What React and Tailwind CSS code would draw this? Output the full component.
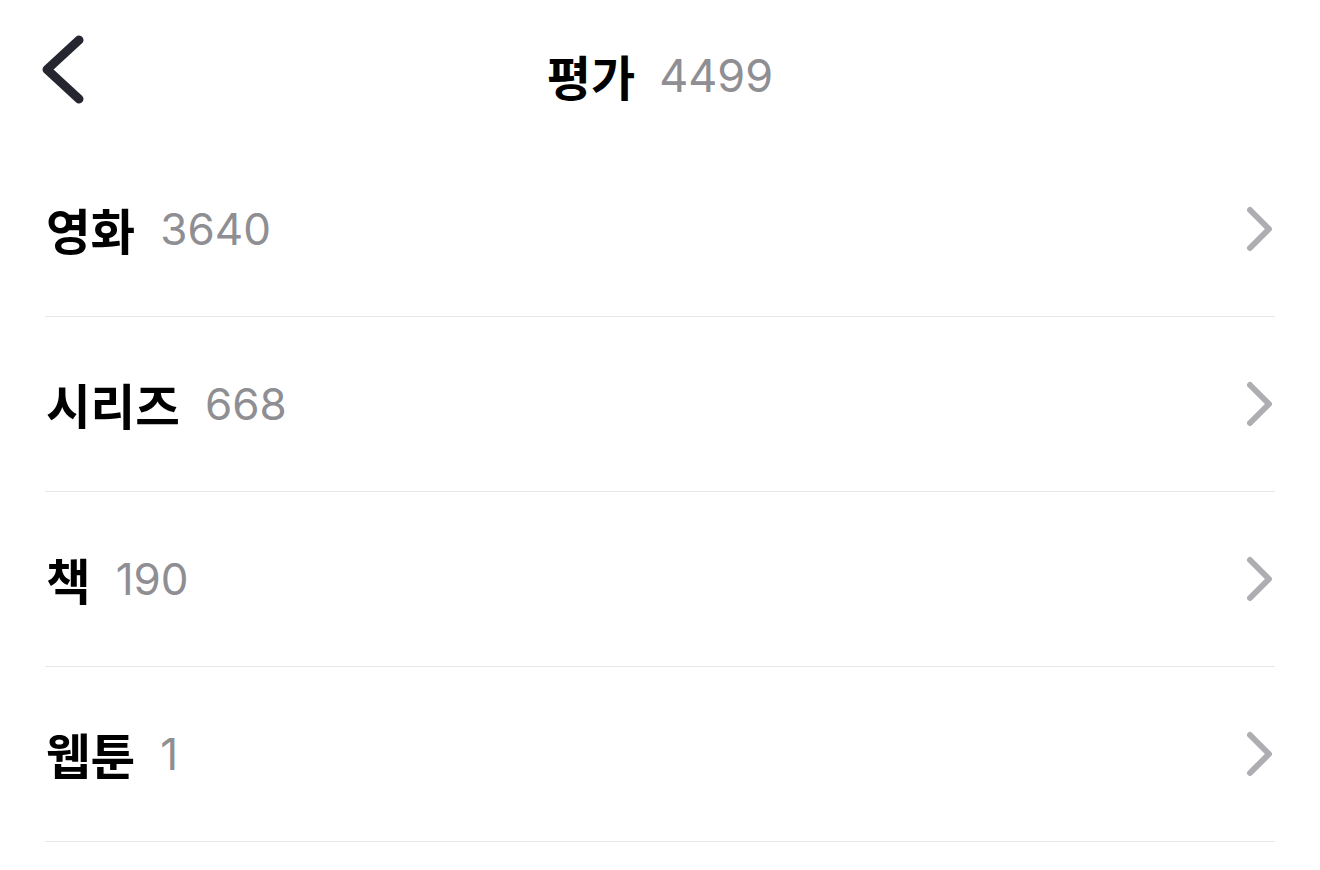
import React from 'react';

const rows = [
  { label: '영화', count: '3640' },
  { label: '시리즈', count: '668' },
  { label: '책', count: '190' },
  { label: '웹툰', count: '1' },
];

const font = { fontFamily: '"Inter", "Noto Sans CJK KR", sans-serif' };
const hangul = { fontFamily: '"Noto Sans CJK KR", sans-serif' };

const App = () => {
  return (
    <div className="min-h-screen w-[1320px] bg-white" style={font}>
      {/* Header */}
      <header className="grid grid-cols-[1fr_auto_1fr] h-[142px]">
        <div className="pl-[36px]">
          <svg width="52" height="80" viewBox="0 0 52 80" className="mt-[30px] block">
            <path d="M43 10 L11 39.5 L43 69" fill="none" stroke="#262631" strokeWidth="9" strokeLinecap="round" strokeLinejoin="round" />
          </svg>
        </div>
        <div className="mt-[47px] flex items-center gap-[24px] h-[56px]">
          <span className="text-[48px] font-bold text-black leading-none" style={hangul}>평가</span>
          <span className="text-[45px] text-[#8e8e93] leading-none">4499</span>
        </div>
        <div />
      </header>

      {/* List */}
      <ul className="px-[45px]">
        {rows.map((r) => (
          <li key={r.label} className="h-[175px] flex items-center justify-between border-b border-[#e5e5ea]">
            <div className="flex items-center gap-[25px] pl-[1px]">
              <span className="text-[48.5px] font-bold text-black leading-none" style={hangul}>{r.label}</span>
              <span className="text-[44px] text-[#8e8e93] leading-none">{r.count}</span>
            </div>
            <svg width="30" height="48" viewBox="0 0 30 48" className="block">
              <path d="M5 5 L24 24 L5 43" fill="none" stroke="#aeaeb2" strokeWidth="6" strokeLinecap="round" strokeLinejoin="round" />
            </svg>
          </li>
        ))}
      </ul>
    </div>
  );
};

export default App;
